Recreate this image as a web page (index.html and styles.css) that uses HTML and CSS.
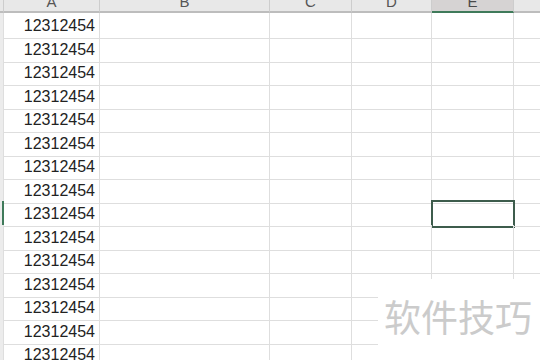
FILE: index.html
```html
<!DOCTYPE html>
<html lang="zh">
<head>
	<meta charset="UTF-8">
	<title>表格</title>
	<link rel="stylesheet" href="styles.css">
</head>
<body>
	<div class="sheet">
		<div class="row head">
			<div class="rh"></div>
			<div class="ch"><span>A</span></div>
			<div class="ch"><span>B</span></div>
			<div class="ch"><span>C</span></div>
			<div class="ch"><span>D</span></div>
			<div class="ch active"><span>E</span></div>
			<div class="ch"><span>F</span></div>
		</div>
		<div id="rows"></div>
	</div>

	<div class="watermark">软件技巧</div>

	<script>
		var rows = document.getElementById('rows');
		for (var i = 1; i <= 15; i++) {
			var sel = (i === 9);
			rows.innerHTML += '<div class="row">' +
				'<div class="rh' + (sel ? ' active' : '') + '"></div>' +
				'<div class="cell num">12312454</div>' +
				'<div class="cell"></div>' +
				'<div class="cell"></div>' +
				'<div class="cell"></div>' +
				'<div class="cell' + (sel ? ' selected' : '') + '"></div>' +
				'<div class="cell"></div>' +
				'</div>';
		}
	</script>
</body>
</html>
```

FILE: styles.css
```css
html, body {
	margin: 0;
	padding: 0;
	background: #fff;
	overflow: hidden;
}
.sheet {
	font-family: "Liberation Sans", Arial, sans-serif;
	width: 540px;
	overflow: hidden;
}
.row {
	display: grid;
	grid-template-columns: 4px 96px 170px 82px 80px 82px 90px;
	height: 23.5px;
}
.row > div {
	box-sizing: border-box;
	border-right: 1px solid #dedede;
	border-bottom: 1px solid #dedede;
}
.row > div:last-child {
	border-right: none !important;
}
.row.head {
	height: 13px;
}
.row.head > div {
	background: #e8e8e8;
	border-right: 1px solid #cdcdcd;
	border-bottom: 2px solid #bdbdbd;
}
.ch {
	display: flex;
	justify-content: center;
	align-items: flex-end;
	overflow: hidden;
	color: #555;
	font-size: 15px;
	line-height: 1;
}
.ch span {
	margin-bottom: 2px;
}
.row.head > .ch.active {
	background: #d6d3d3;
	border-bottom: 2px solid #3f7a5a;
	color: #4a4a4a;
}
.rh {
	background: #ececec;
}
.rh.active {
	border-right: 2px solid #3f7a5a !important;
}
.cell.num {
	text-align: right;
	padding-right: 4px;
	font-size: 16px;
	line-height: 25px;
	color: #222;
}
.cell.selected {
	outline: 2px solid #3d5c4c;
	outline-offset: -1px;
}
.watermark {
	position: absolute;
	left: 378px;
	top: 279px;
	width: 162px;
	height: 81px;
	background: #fff;
	box-sizing: border-box;
	padding: 15px 0 0 6px;
	font-family: "Noto Sans CJK SC", sans-serif;
	font-size: 37px;
	line-height: 1.2;
	color: #cbcbcb;
}
```
